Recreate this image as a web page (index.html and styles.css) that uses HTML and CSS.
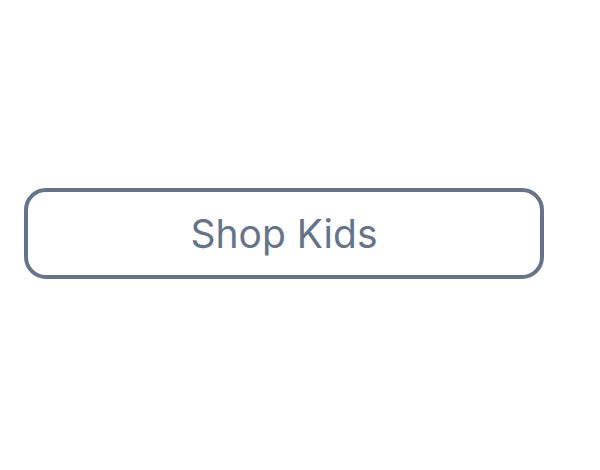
FILE: index.html
```html
<!DOCTYPE html>
<html>
<head>
<meta charset="utf-8">
<link rel="stylesheet" href="styles.css">
</head>
<body>
<div class="page">
  <button class="shop-btn">Shop Kids</button>
</div>
</body>
</html>
```

FILE: styles.css
```css
html, body {
  margin: 0;
  padding: 0;
  background: #ffffff;
}
.page {
  width: 600px;
  height: 470px;
  box-sizing: border-box;
  padding: 188px 0 0 24px;
}
.shop-btn {
  display: flex;
  align-items: center;
  justify-content: center;
  width: 520px;
  height: 91px;
  box-sizing: border-box;
  border: 4px solid #64748b;
  border-radius: 22px;
  background: #ffffff;
  color: #64748b;
  font-family: Inter, "Noto Sans", sans-serif;
  font-size: 39px;
  font-weight: 400;
  padding: 0;
}
```
